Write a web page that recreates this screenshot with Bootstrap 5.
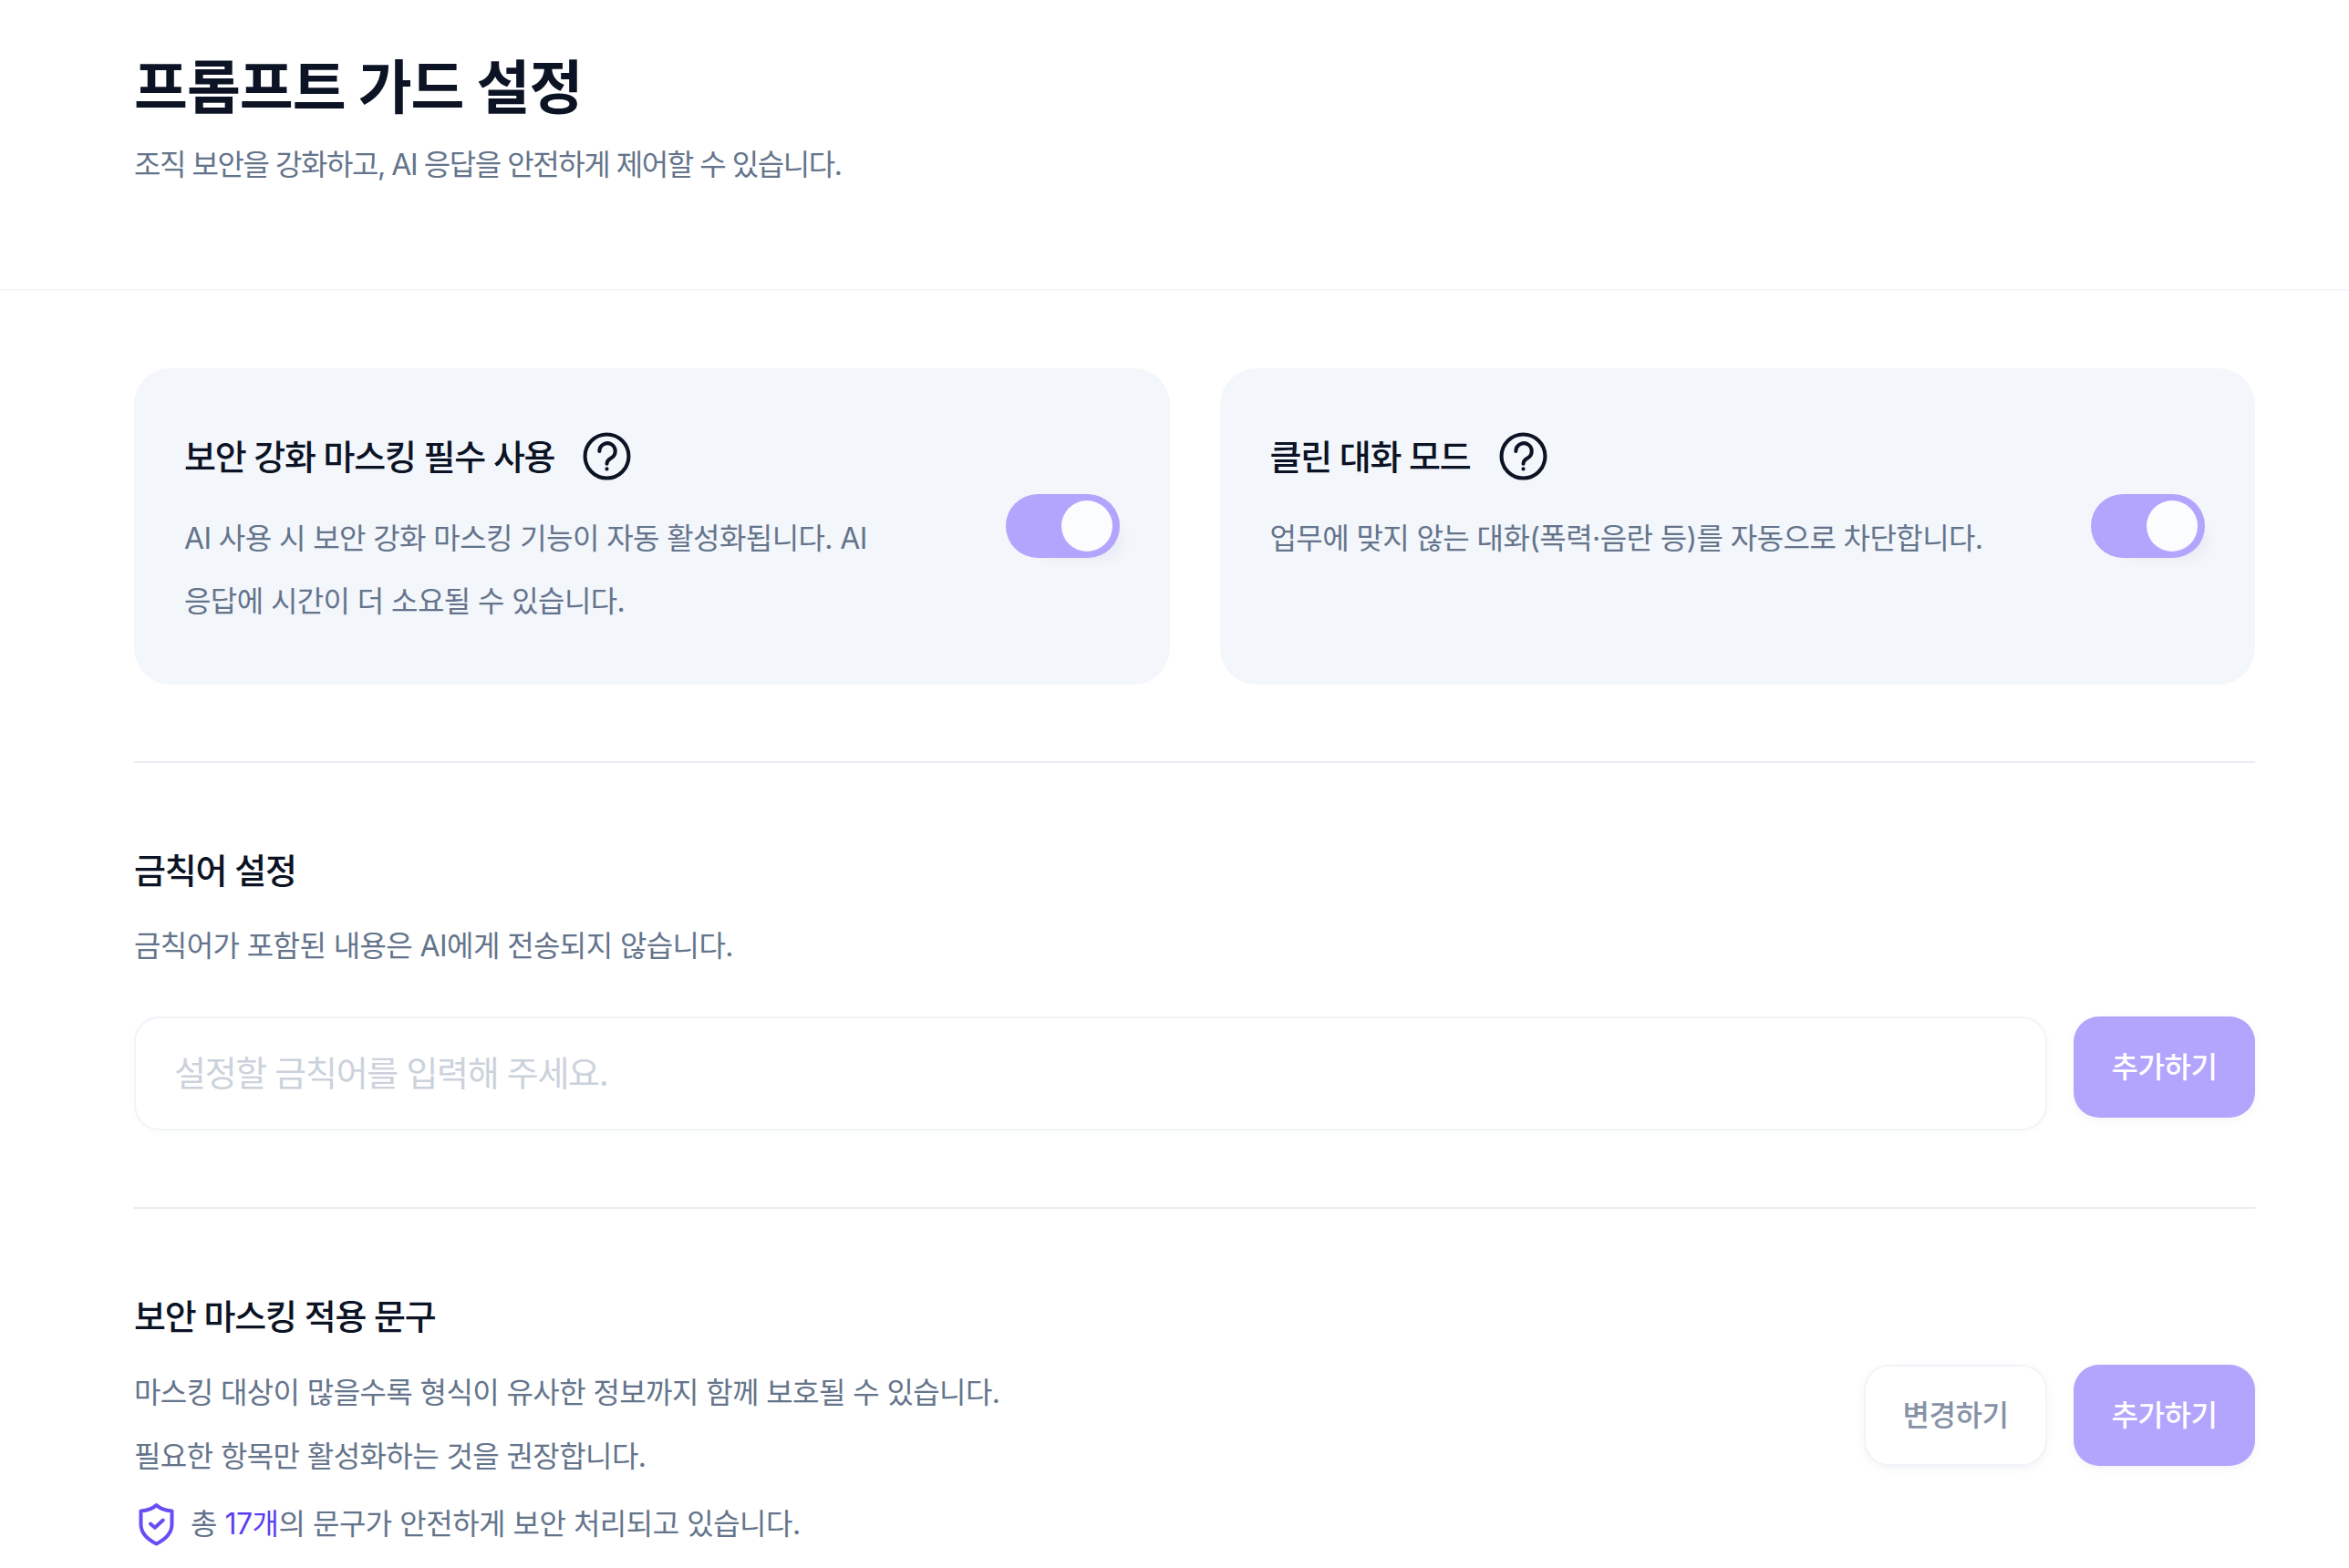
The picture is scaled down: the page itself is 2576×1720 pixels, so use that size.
<!DOCTYPE html>
<html lang="ko">
<head>
    <meta charset="UTF-8">
    <meta name="viewport" content="width=device-width, initial-scale=1.0">
    <title>프롬프트 가드 설정</title>
    <link href="https://cdn.jsdelivr.net/npm/bootstrap@5.3.2/dist/css/bootstrap.min.css" rel="stylesheet">
    <style>
        body {
            font-family: Inter, "Noto Sans CJK KR", sans-serif;
            background: #fff;
            color: #0b1324;
        }
        .guard-header {
            height: 319px;
            padding: 56px 147px 0;
            border-bottom: 2px solid #f3f5f9;
        }
        .guard-title {
            font-size: 64px;
            font-weight: 700;
            line-height: 80px;
            letter-spacing: -1px;
            margin: 0 0 21px;
        }
        .guard-muted {
            font-size: 32px;
            line-height: 48px;
            color: #64748b;
            letter-spacing: -.6px;
            margin: 0;
        }
        .guard-header .guard-muted { letter-spacing: -1.45px; }
        .guard-main { padding: 85px 103px 0 147px; }
        .guard-cards { gap: 55px; }
        .guard-card {
            flex: 1 1 0;
            height: 347px;
            padding: 70px 55px 0 55px;
            background: #f3f6fb;
            border-radius: 40px;
        }
        .guard-card-title {
            font-size: 38px;
            font-weight: 500;
            line-height: 52px;
            letter-spacing: -1.25px;
            margin: 0;
            gap: 31px;
        }
        .guard-card-text {
            width: 820px;
            margin-top: 29px;
            font-size: 32px;
            line-height: 69px;
            color: #64748b;
            letter-spacing: -.6px;
        }
        .guard-switch.form-switch { padding: 0; margin: 68px 0 0; min-height: 0; }
        .guard-switch .form-check-input,
        .guard-switch .form-check-input:checked,
        .guard-switch .form-check-input:focus {
            width: 125px;
            height: 70px;
            margin: 0;
            float: none;
            display: block;
            border: 0;
            border-radius: 35px;
            background-color: #b3a4fd;
            background-image: url("data:image/svg+xml,<svg xmlns='http://www.w3.org/2000/svg' viewBox='0 0 125 70'><circle cx='89' cy='35' r='28' fill='%23fbfcfe'/></svg>");
            background-position: center;
            background-size: 100% 100%;
            box-shadow: 18px 16px 14px -16px rgba(100, 116, 139, .08);
        }
        .guard-section-line {
            border: 0;
            border-top: 2px solid #e8ecf3;
            opacity: 1;
            margin: 84px 0 92px;
        }
        .guard-section-title {
            font-size: 38px;
            font-weight: 500;
            line-height: 52px;
            letter-spacing: -1.2px;
            margin: 0;
        }
        .guard-section-text { margin-top: 33px; }
        .guard-input-row { gap: 29px; margin-top: 53px; }
        .guard-input.form-control {
            height: 125px;
            padding: 0 42px 2px;
            font-size: 38px;
            letter-spacing: -1.3px;
            border: 2px solid #f1f4f9;
            border-radius: 28px;
            box-shadow: 0 2px 6px rgba(100, 116, 139, .04);
        }
        .guard-input.form-control::placeholder { color: #cbd2dc; }
        .guard-btn.btn {
            width: 199px;
            height: 111px;
            padding: 0;
            flex-shrink: 0;
            font-size: 32px;
            font-weight: 500;
            letter-spacing: -.5px;
            border-radius: 28px;
            box-shadow: 0 3px 8px rgba(100, 116, 139, .08);
        }
        .guard-btn-primary.btn { background: #b3a4fd; border: 0; color: #fff; }
        .guard-btn-light.btn { width: 201px; background: #fff; border: 2px solid #f1f4f9; color: #8592a6; }
        .guard-mask-text { margin-top: 23px; line-height: 70px; }
        .guard-count { margin-top: 15px; gap: 14px; letter-spacing: -.5px; }
        .guard-count b { font-weight: 400; color: #5b3ff0; }
        .guard-actions { gap: 29px; margin-top: 79px; }
    </style>
</head>
<body>
<header class="guard-header">
    <h1 class="guard-title">프롬프트 가드 설정</h1>
    <p class="guard-muted">조직 보안을 강화하고, AI 응답을 안전하게 제어할 수 있습니다.</p>
</header>

<main class="guard-main">
    <div class="d-flex guard-cards">
        <div class="guard-card d-flex justify-content-between align-items-start">
            <div>
                <h2 class="guard-card-title d-flex align-items-center">보안 강화 마스킹 필수 사용
                    <svg width="53" height="53" viewBox="0 0 52 52" fill="none" stroke="#0b1324" stroke-width="4" stroke-linecap="round"><circle cx="26" cy="26" r="23.5"/><path d="M18 20.500a8.500 8.500 0 1 1 13 7.200c-2.800 1.700-5 3-5 6.300"/><path d="M26 39.500v.2"/></svg>
                </h2>
                <div class="guard-card-text">AI 사용 시 보안 강화 마스킹 기능이 자동 활성화됩니다. AI<br>응답에 시간이 더 소요될 수 있습니다.</div>
            </div>
            <div class="form-check form-switch guard-switch">
                <input class="form-check-input" type="checkbox" role="switch" checked aria-label="보안 강화 마스킹 필수 사용">
            </div>
        </div>
        <div class="guard-card d-flex justify-content-between align-items-start">
            <div>
                <h2 class="guard-card-title d-flex align-items-center">클린 대화 모드
                    <svg width="53" height="53" viewBox="0 0 52 52" fill="none" stroke="#0b1324" stroke-width="4" stroke-linecap="round"><circle cx="26" cy="26" r="23.5"/><path d="M18 20.500a8.500 8.500 0 1 1 13 7.200c-2.800 1.700-5 3-5 6.300"/><path d="M26 39.500v.2"/></svg>
                </h2>
                <div class="guard-card-text">업무에 맞지 않는 대화(폭력·음란 등)를 자동으로 차단합니다.</div>
            </div>
            <div class="form-check form-switch guard-switch">
                <input class="form-check-input" type="checkbox" role="switch" checked aria-label="클린 대화 모드">
            </div>
        </div>
    </div>

    <hr class="guard-section-line">

    <section>
        <h3 class="guard-section-title">금칙어 설정</h3>
        <p class="guard-muted guard-section-text">금칙어가 포함된 내용은 AI에게 전송되지 않습니다.</p>
        <div class="d-flex align-items-start guard-input-row">
            <input type="text" class="form-control guard-input" placeholder="설정할 금칙어를 입력해 주세요.">
            <button type="button" class="btn guard-btn guard-btn-primary">추가하기</button>
        </div>
    </section>

    <hr class="guard-section-line">

    <section class="d-flex justify-content-between align-items-start">
        <div>
            <h3 class="guard-section-title">보안 마스킹 적용 문구</h3>
            <div class="guard-muted guard-mask-text">
                마스킹 대상이 많을수록 형식이 유사한 정보까지 함께 보호될 수 있습니다.<br>
                필요한 항목만 활성화하는 것을 권장합니다.
            </div>
            <div class="guard-muted guard-count d-flex align-items-center">
                <svg width="48" height="48" viewBox="0 0 48 48" fill="none" stroke="#6a4cf5" stroke-width="4" stroke-linecap="round" stroke-linejoin="round"><path d="M24.500 3C28 6.500 34 9 41.500 9.500V24c0 10-8 17-17 21.500C15.500 41 7.500 34 7.500 24V9.500C15 9 21 6.500 24.500 3z"/><path d="M18 23.500l4.800 4.200 9-8.200"/></svg>
                <span>총 <b>17개</b>의 문구가 안전하게 보안 처리되고 있습니다.</span>
            </div>
        </div>
        <div class="d-flex guard-actions">
            <button type="button" class="btn guard-btn guard-btn-light">변경하기</button>
            <button type="button" class="btn guard-btn guard-btn-primary">추가하기</button>
        </div>
    </section>
</main>
<script src="https://cdn.jsdelivr.net/npm/bootstrap@5.3.2/dist/js/bootstrap.bundle.min.js"></script>
</body>
</html>
